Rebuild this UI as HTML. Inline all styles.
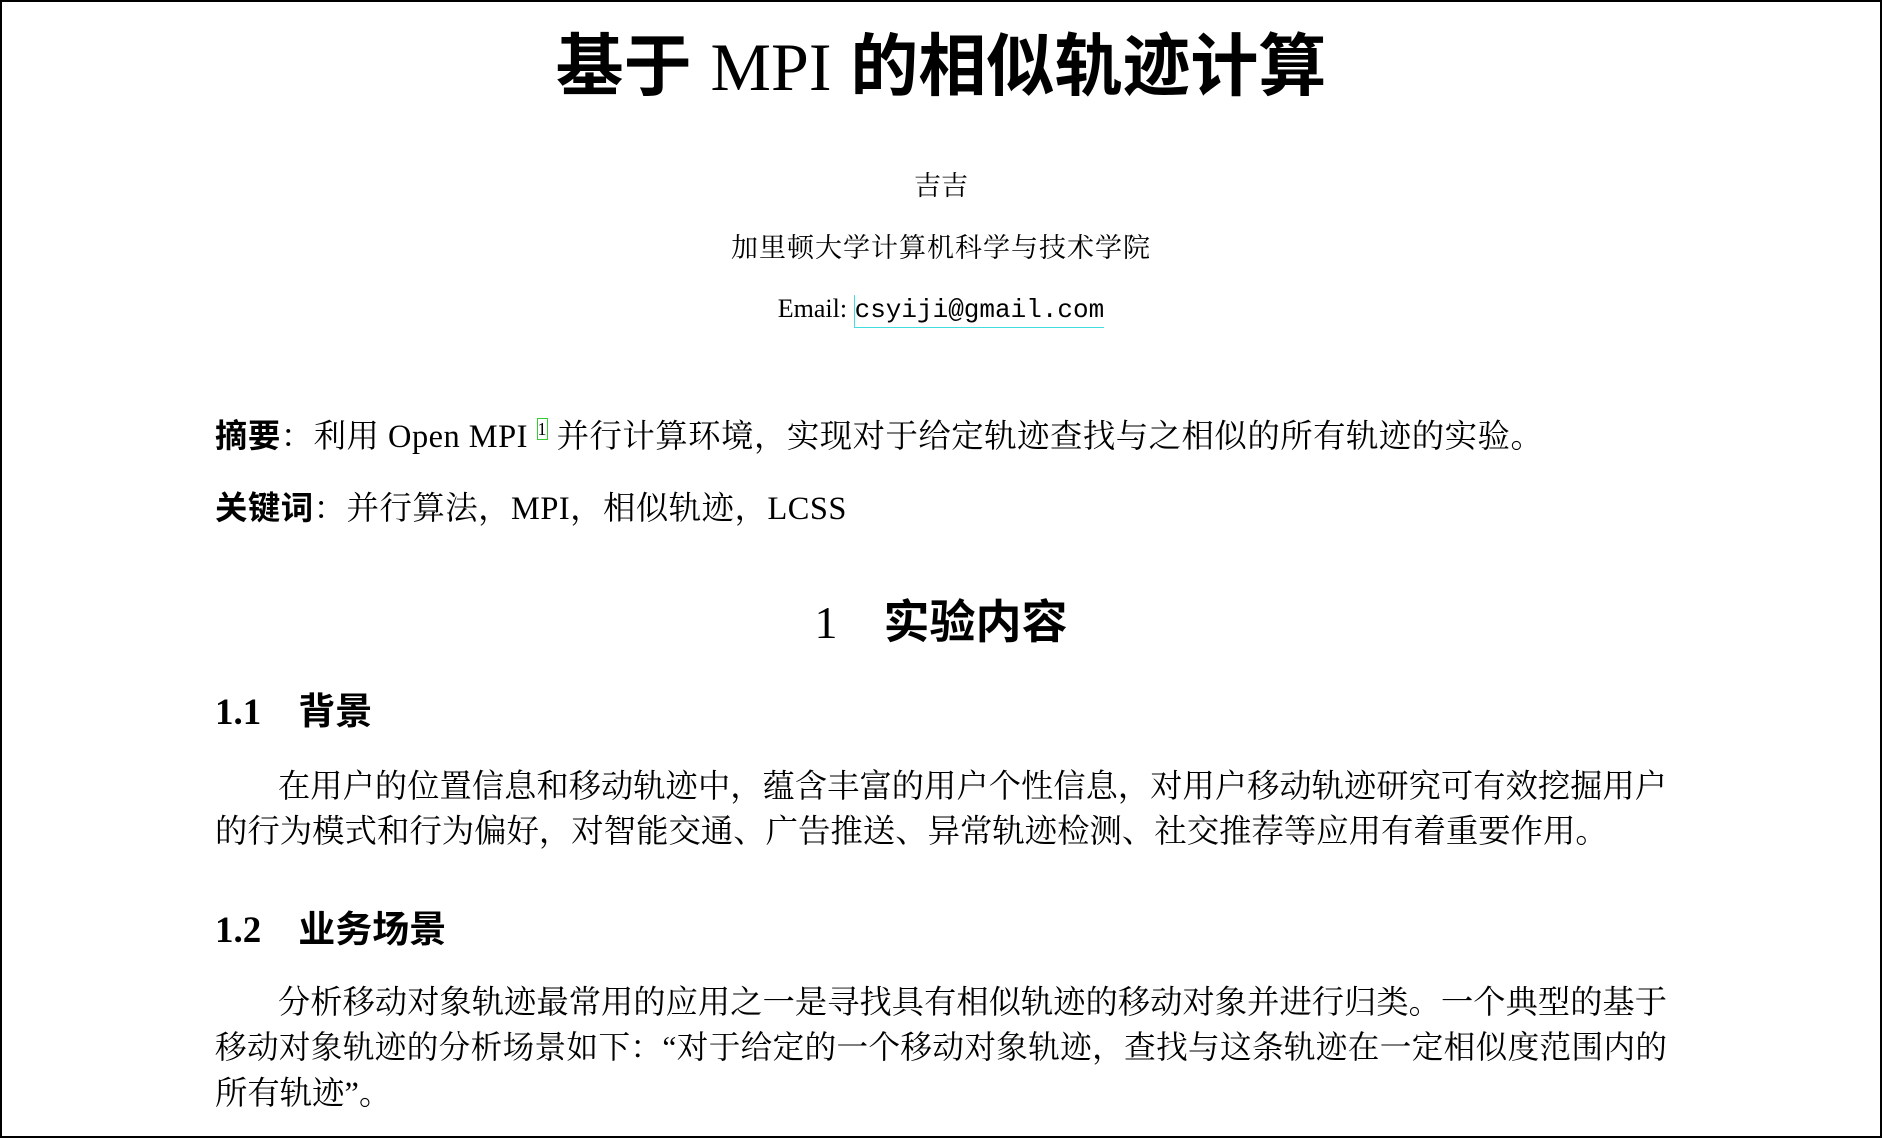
<!DOCTYPE html>
<html><head><meta charset="utf-8"><style>
html,body{margin:0;padding:0;background:#fff}
body{width:1882px;height:1138px;position:relative;overflow:hidden;box-sizing:border-box;border:2px solid #000;color:#000}
.l{position:absolute;white-space:nowrap;font-family:"Liberation Serif","Noto Serif CJK SC",serif;font-size:32.4px;line-height:40px}
.c{left:0;width:1878px;text-align:center}
.j{left:213px;width:1452px;text-align:justify;text-align-last:justify}
.s{font-family:"Liberation Sans","Noto Sans CJK SC",sans-serif;font-weight:bold}
.m{font-family:"Liberation Mono",monospace}
</style></head><body>
<div class="l c" style="top:25px;font-size:68px;line-height:80px"><span class="s">基于 </span><span style="font-family:'Liberation Serif',serif">MPI</span><span class="s"> 的相似轨迹计算</span></div>
<div class="l c" style="top:164px;font-size:27px">吉吉</div>
<div class="l c" style="top:226px;font-size:27px;letter-spacing:1px">加里顿大学计算机科学与技术学院</div>
<div class="l c" style="top:287px;font-size:26px">Email: <span class="m" style="border-bottom:1px solid #4dd;border-left:1px solid #4dd;padding-bottom:2px">csyiji@gmail.com</span></div>
<div class="l" style="left:213px;top:414px;letter-spacing:0.5px"><span class="s">摘要</span>：利用 Open MPI <sup style="font-size:18px;border:1px solid #3c3;line-height:16px">1</sup> 并行计算环境，实现对于给定轨迹查找与之相似的所有轨迹的实验。</div>
<div class="l" style="left:213px;top:486px;letter-spacing:0.5px"><span class="s">关键词</span>：并行算法，MPI，相似轨迹，LCSS</div>
<div class="l c" style="top:594px;font-size:46px;line-height:52px"><span style="font-family:'Liberation Serif',serif">1</span>&nbsp;&nbsp;&nbsp;&nbsp;<span class="s">实验内容</span></div>
<div class="l" style="left:213px;top:690px;font-size:37px"><span style="font-family:'Liberation Serif',serif;font-weight:bold">1.1</span>&nbsp;&nbsp;&nbsp;&nbsp;<span class="s">背景</span></div>
<div class="l" style="left:276px;width:1389px;top:764px;text-align:justify;text-align-last:justify;font-size:32.2px">在用户的位置信息和移动轨迹中，蕴含丰富的用户个性信息，对用户移动轨迹研究可有效挖掘用户</div>
<div class="l" style="left:213px;top:810px">的行为模式和行为偏好，对智能交通、广告推送、异常轨迹检测、社交推荐等应用有着重要作用。</div>
<div class="l" style="left:213px;top:908px;font-size:37px"><span style="font-family:'Liberation Serif',serif;font-weight:bold">1.2</span>&nbsp;&nbsp;&nbsp;&nbsp;<span class="s">业务场景</span></div>
<div class="l" style="left:276px;width:1389px;top:980px;text-align:justify;text-align-last:justify;font-size:32.2px">分析移动对象轨迹最常用的应用之一是寻找具有相似轨迹的移动对象并进行归类。一个典型的基于</div>
<div class="l j" style="top:1026px;font-size:31.6px">移动对象轨迹的分析场景如下：“对于给定的一个移动对象轨迹，查找与这条轨迹在一定相似度范围内的</div>
<div class="l" style="left:213px;top:1072px">所有轨迹”。</div>
</body></html>
